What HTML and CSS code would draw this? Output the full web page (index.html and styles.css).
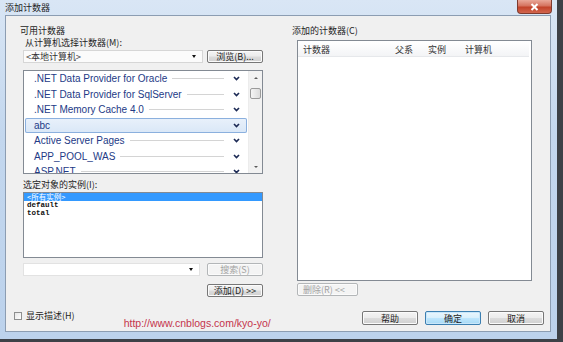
FILE: index.html
```html
<!DOCTYPE html>
<html lang="zh-CN">
<head>
    <meta charset="UTF-8">
    <meta name="viewport" content="width=device-width, initial-scale=1.0">
    <title>添加计数器</title>
    <link rel="stylesheet" href="styles.css">
</head>
<body>
    <div class="window">
        <div class="titlebar">
            <span class="title">添加计数器</span>
            <span class="close-btn">
                <svg width="9" height="8" viewBox="0 0 9 8"><path d="M1.5 1 L7.5 7 M7.5 1 L1.5 7" stroke="#fff" stroke-width="2"/></svg>
            </span>
        </div>
        <div class="client">
            <div class="main">
                <div class="left-col">
                    <div class="group-label">可用计数器</div>
                    <div class="sub-label">从计算机选择计数器(M):</div>
                    <div class="ctrl-row">
                        <div class="combo combo-machine">
                            <span class="combo-text">&lt;本地计算机&gt;</span>
                            <span class="combo-arrow"></span>
                        </div>
                        <button class="btn btn-side">浏览(B)...</button>
                    </div>
                    <div class="counter-list">
                        <div class="items">
                            <div class="item"><span>.NET Data Provider for Oracle</span><i class="item-line"></i><svg class="chev" width="7" height="5" viewBox="0 0 7 5"><path d="M1 1 L3.5 3.6 L6 1" fill="none" stroke="#1c2a55" stroke-width="1.6"/></svg></div>
                            <div class="item"><span>.NET Data Provider for SqlServer</span><i class="item-line"></i><svg class="chev" width="7" height="5" viewBox="0 0 7 5"><path d="M1 1 L3.5 3.6 L6 1" fill="none" stroke="#1c2a55" stroke-width="1.6"/></svg></div>
                            <div class="item"><span>.NET Memory Cache 4.0</span><i class="item-line"></i><svg class="chev" width="7" height="5" viewBox="0 0 7 5"><path d="M1 1 L3.5 3.6 L6 1" fill="none" stroke="#1c2a55" stroke-width="1.6"/></svg></div>
                            <div class="item selected"><span>abc</span><i class="item-line none"></i><svg class="chev" width="7" height="5" viewBox="0 0 7 5"><path d="M1 1 L3.5 3.6 L6 1" fill="none" stroke="#1c2a55" stroke-width="1.6"/></svg></div>
                            <div class="item"><span>Active Server Pages</span><i class="item-line"></i><svg class="chev" width="7" height="5" viewBox="0 0 7 5"><path d="M1 1 L3.5 3.6 L6 1" fill="none" stroke="#1c2a55" stroke-width="1.6"/></svg></div>
                            <div class="item"><span>APP_POOL_WAS</span><i class="item-line"></i><svg class="chev" width="7" height="5" viewBox="0 0 7 5"><path d="M1 1 L3.5 3.6 L6 1" fill="none" stroke="#1c2a55" stroke-width="1.6"/></svg></div>
                            <div class="item"><span>ASP.NET</span><i class="item-line"></i><svg class="chev" width="7" height="5" viewBox="0 0 7 5"><path d="M1 1 L3.5 3.6 L6 1" fill="none" stroke="#1c2a55" stroke-width="1.6"/></svg></div>
                        </div>
                        <div class="vscroll">
                            <div class="sb-btn"><span class="tri-up"></span></div>
                            <div class="sb-thumb"></div>
                            <div class="sb-track"></div>
                            <div class="sb-btn"><span class="tri-down"></span></div>
                        </div>
                    </div>
                    <div class="sub-label instance-label">选定对象的实例(I):</div>
                    <div class="instance-list">
                        <div class="inst-item selected">&lt;所有实例&gt;</div>
                        <div class="inst-item">default</div>
                        <div class="inst-item">total</div>
                    </div>
                    <div class="ctrl-row ctrl-row2">
                        <div class="combo combo-search">
                            <span class="combo-text"></span>
                            <span class="combo-arrow"></span>
                        </div>
                        <button class="btn btn-side" disabled>搜索(S)</button>
                    </div>
                    <div class="add-row">
                        <button class="btn btn-side">添加(D) &gt;&gt;</button>
                    </div>
                </div>
                <div class="right-col">
                    <div class="group-label">添加的计数器(C)</div>
                    <div class="counter-view">
                        <div class="view-header">
                            <span class="col col-name">计数器</span>
                            <span class="col col-parent">父系</span>
                            <span class="col col-inst">实例</span>
                            <span class="col col-machine">计算机</span>
                        </div>
                    </div>
                    <button class="btn btn-delete" disabled>删除(R) &lt;&lt;</button>
                </div>
            </div>
            <div class="footer">
                <label class="check-label"><span class="checkbox"></span>显示描述(H)</label>
                <span class="watermark">http://www.cnblogs.com/kyo-yo/</span>
                <div class="buttons">
                    <button class="btn btn-main">帮助</button>
                    <button class="btn btn-main btn-default">确定</button>
                    <button class="btn btn-main">取消</button>
                </div>
            </div>
        </div>
    </div>
</body>
</html>
```

FILE: styles.css
```css
body {
    margin: 0;
    width: 563px;
    height: 342px;
    overflow: hidden;
    background: #3d4147;
}
.window {
    width: 557px;
    height: 339px;
    display: flex;
    flex-direction: column;
    background: linear-gradient(to bottom, #d9e6f5, #c3d7ee 40%, #bcd2ec);
    font-family: "Noto Sans CJK SC", sans-serif;
    font-size: 9px;
    color: #1e1e1e;
}
.titlebar {
    height: 15px;
    display: flex;
    align-items: flex-start;
    flex-shrink: 0;
}
.title {
    padding-left: 5px;
    line-height: 15px;
}
.close-btn {
    margin-left: auto;
    margin-right: 5px;
    width: 35px;
    height: 14px;
    box-sizing: border-box;
    display: flex;
    align-items: center;
    justify-content: center;
    background: linear-gradient(to bottom, #e9a899, #d5735f 45%, #c2432a 55%, #d2654d);
    border: 1px solid #7d3a2e;
    border-top: none;
    border-radius: 0 0 4px 4px;
}
.client {
    flex: 1;
    margin: 0 6px 7px 5px;
    display: flex;
    flex-direction: column;
    background: #f0f0f0;
    border: 1px solid #8c9db2;
}
.main {
    display: flex;
    padding: 9px 0 0 14px;
}

/* left side */
.left-col {
    width: 243px;
    display: flex;
    flex-direction: column;
}
.group-label {
    height: 12px;
    line-height: 12px;
}
.sub-label {
    margin-left: 5px;
    height: 12px;
    line-height: 12px;
}
.ctrl-row {
    display: flex;
    gap: 4px;
    margin-top: 1px;
    margin-left: 3px;
    height: 13px;
}
.combo {
    width: 180px;
    box-sizing: border-box;
    display: flex;
    align-items: center;
    background: #fbfbfb;
    border: 1px solid #d6d6d6;
    padding: 0 6px 0 2px;
}
.combo-text {
    flex: 1;
    line-height: 11px;
    color: #333;
}
.combo-arrow {
    width: 0;
    height: 0;
    border-left: 2.5px solid transparent;
    border-right: 2.5px solid transparent;
    border-top: 3px solid #111;
}
.btn {
    box-sizing: border-box;
    padding: 0;
    font-family: "Noto Sans CJK SC", sans-serif;
    font-size: 9px;
    line-height: 11px;
    color: #1e1e1e;
    background: linear-gradient(to bottom, #f4f4f4, #ececec 48%, #dcdcdc 52%, #d0d0d0);
    border: 1px solid #777;
    border-radius: 2px;
    box-shadow: inset 0 0 0 1px #fbfbfb;
}
.btn:disabled {
    color: #a3a3a3;
    background: #f4f4f4;
    border-color: #b3b6b8;
}
.btn-side {
    width: 56px;
    height: 13px;
}
.counter-list {
    margin-top: 7px;
    margin-left: 3px;
    width: 240px;
    height: 104px;
    box-sizing: border-box;
    display: flex;
    background: #fff;
    border: 1px solid #838a93;
}
.items {
    flex: 1;
    overflow: hidden;
}
.item {
    height: 15.5px;
    box-sizing: border-box;
    display: flex;
    align-items: center;
    margin: 0 1px;
    padding: 0 7px 0 9px;
    font-family: "Liberation Sans", Arial, sans-serif;
    font-size: 10px;
    color: #233a86;
    white-space: nowrap;
}
.item.selected {
    background: linear-gradient(to bottom, #e9f1fb, #d9e7f7);
    box-shadow: inset 0 0 0 1px #8bb0de;
    border-radius: 2px;
}
.item-line {
    flex: 1;
    height: 1px;
    margin: 0 9px 0 5px;
    background: #d4d4d4;
}
.item-line.none {
    background: none;
}
.vscroll {
    width: 13px;
    display: flex;
    flex-direction: column;
    background: #f2f2f2;
    border-left: 1px solid #ececec;
}
.sb-btn {
    height: 13px;
    display: flex;
    align-items: center;
    justify-content: center;
}
.tri-up, .tri-down {
    width: 0;
    height: 0;
    border-left: 2px solid transparent;
    border-right: 2px solid transparent;
}
.tri-up {
    border-bottom: 2px solid #5a5a5a;
}
.tri-down {
    border-top: 2px solid #5a5a5a;
}
.sb-thumb {
    margin: 4px 1px 0;
    height: 11px;
    box-sizing: border-box;
    background: linear-gradient(to right, #f5f5f5, #dcdcdc);
    border: 1px solid #9b9b9b;
    border-radius: 2px;
}
.sb-track {
    flex: 1;
}
.instance-label {
    margin-top: 5px;
    margin-left: 3px;
}
.instance-list {
    margin-top: 1px;
    margin-left: 3px;
    width: 240px;
    height: 66px;
    box-sizing: border-box;
    background: #fff;
    border: 1px solid #838a93;
}
.inst-item {
    height: 8px;
    line-height: 8px;
    padding-left: 3px;
    font-family: "Liberation Mono", monospace;
    font-size: 7.5px;
    font-weight: bold;
    color: #111;
}
.inst-item.selected {
    background: #3399ff;
    color: #fff;
    font-family: "Noto Sans CJK SC", sans-serif;
    font-weight: normal;
    font-size: 7.5px;
}
.ctrl-row2 {
    margin-top: 5px;
    gap: 7px;
}
.combo-search {
    width: 177px;
    background: #fff;
    border-color: #e2e2e2;
}
.add-row {
    margin-top: 8px;
    display: flex;
    justify-content: flex-end;
}

/* right side */
.right-col {
    margin-left: 29px;
    width: 245px;
    display: flex;
    flex-direction: column;
}
.counter-view {
    margin-top: 3px;
    margin-left: 5px;
    width: 235px;
    height: 241px;
    box-sizing: border-box;
    background: #fff;
    border: 1px solid #838a93;
}
.view-header {
    height: 14px;
    margin: 1px 2px 0 0;
    display: flex;
    align-items: center;
    background: linear-gradient(to bottom, #ffffff, #f3f4f6);
    border-bottom: 1px solid #e6e8eb;
}
.col {
    padding-left: 5px;
    box-sizing: border-box;
    color: #333;
}
.col-name { width: 92px; }
.col-parent { width: 33px; }
.col-inst { width: 37px; }
.col-machine { flex: 1; }
.btn-delete {
    margin-top: 2px;
    margin-left: 5px;
    width: 61px;
    height: 13px;
    text-align: left;
    padding-left: 5px;
}

/* bottom */
.footer {
    display: flex;
    align-items: flex-start;
    margin-top: 14px;
    padding: 0 6px 0 8px;
}
.check-label {
    display: flex;
    align-items: center;
    gap: 4px;
    height: 10px;
    line-height: 10px;
}
.checkbox {
    width: 8px;
    height: 8px;
    box-sizing: border-box;
    background: linear-gradient(to bottom right, #e6e6e6, #fff);
    border: 1px solid #8e8f8f;
}
.watermark {
    margin-left: 49px;
    margin-top: 6px;
    font-family: "Liberation Sans", Arial, sans-serif;
    font-size: 10.5px;
    line-height: 12px;
    color: #c5344c;
}
.buttons {
    margin-left: auto;
    display: flex;
    gap: 7px;
}
.btn-main {
    width: 56px;
    height: 14px;
}
.btn-default {
    border-color: #3c7fb1;
    background: linear-gradient(to bottom, #eaf6fd, #d9f0fc 48%, #bee6fd 52%, #a7d9f5);
    box-shadow: inset 0 0 0 1px #c9e7fa;
}
```
